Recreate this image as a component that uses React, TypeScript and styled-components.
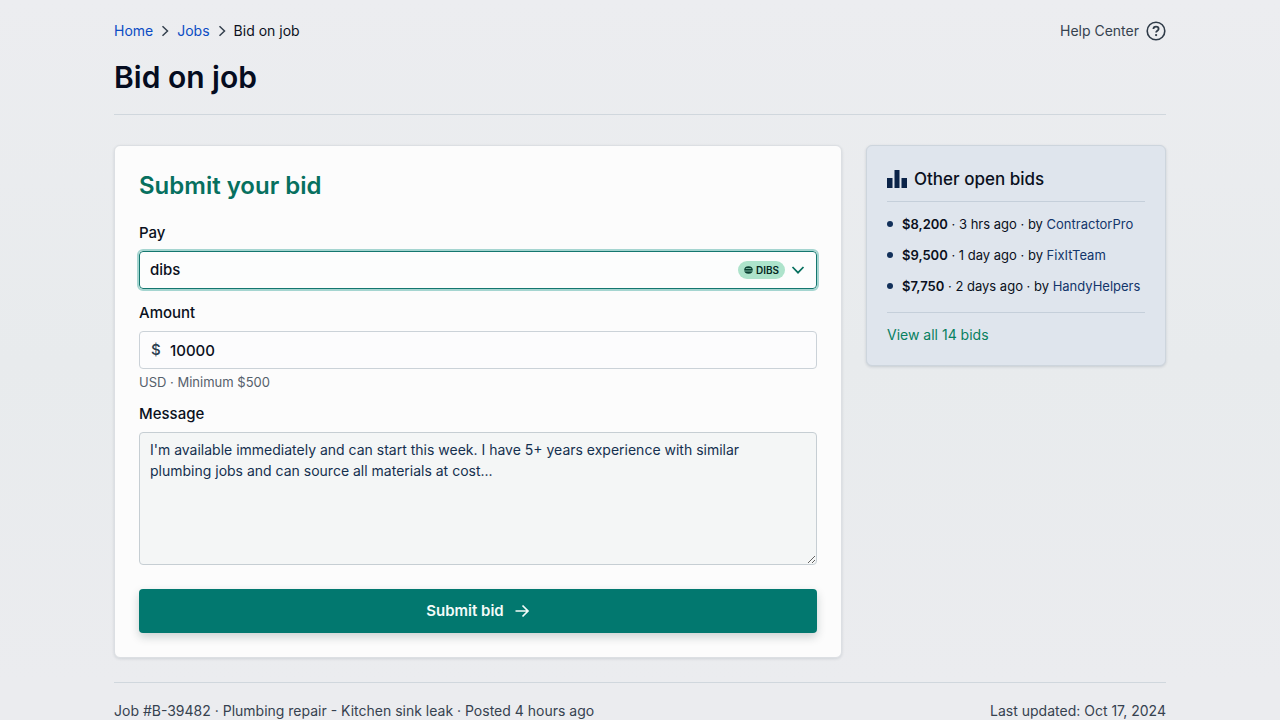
import React from "react";
import styled, { createGlobalStyle } from "styled-components";

const GlobalStyle = createGlobalStyle`
  *, *::before, *::after { box-sizing: border-box; }
  body {
    margin: 0;
    min-height: 100vh;
    background: linear-gradient(180deg, #ecedf0 0%, #e8ebed 50%, #ebecef 95%);
    color: #0a1020;
    font-family: Inter, "Liberation Sans", sans-serif;
    font-size: 14px;
    line-height: 20px;
  }
  a { text-decoration: none; }
  input, select, textarea, button { font: inherit; color: inherit; margin: 0; }
`;

const Page = styled.div`
  max-width: 1100px;
  margin: 0 auto;
  padding: 21px 24px 0;
`;

const TopBar = styled.div`
  display: flex;
  justify-content: space-between;
  align-items: center;
`;

const Crumbs = styled.ol`
  display: flex;
  align-items: center;
  gap: 8px;
  margin: 0;
  padding: 0;
  list-style: none;
`;

const Crumb = styled.li`
  display: flex;
  align-items: center;
  gap: 8px;
  color: #0c111c;
  a { color: #0a4cc4; }
`;

const HelpLink = styled.a`
  display: flex;
  align-items: center;
  gap: 7px;
  color: #36424f;
`;

const PageTitle = styled.h1`
  margin: 16px 0 0;
  font-size: 30px;
  line-height: 40px;
  font-weight: 600;
  color: #050c20;
`;

const Divider = styled.hr<{ $space: number }>`
  margin: ${(p) => p.$space}px 0 0;
  border: 0;
  border-top: 1px solid #d0d7dd;
`;

const Columns = styled.div`
  display: grid;
  grid-template-columns: minmax(0, 1fr) 300px;
  align-items: start;
  gap: 24px;
  margin-top: 30px;
`;

const FormCard = styled.form`
  display: flex;
  flex-direction: column;
  padding: 24px;
  background: #fcfcfc;
  border: 1px solid #dcdfe3;
  border-radius: 6px;
  box-shadow: 0 1px 3px rgba(20, 40, 60, 0.12);
`;

const FormTitle = styled.h2`
  margin: 0 0 21px;
  font-size: 24px;
  line-height: 32px;
  font-weight: 600;
  color: #07705f;
`;

const Field = styled.div<{ $gap: number }>`
  display: flex;
  flex-direction: column;
  margin-bottom: ${(p) => p.$gap}px;
`;

const Label = styled.label`
  margin-bottom: 8px;
  font-size: 15px;
  font-weight: 500;
`;

const Control = styled.div`
  position: relative;
  display: flex;
  align-items: center;
`;

const PaySelect = styled.select`
  appearance: none;
  width: 100%;
  height: 38px;
  padding: 0 88px 0 10px;
  font-size: 15px;
  font-weight: 500;
  background: #fcfdfd;
  border: 1px solid #14776f;
  border-radius: 4px;
  outline: 2px solid #a5d5d0;
`;

const SelectAdornment = styled.span`
  position: absolute;
  right: 12px;
  display: flex;
  align-items: center;
  gap: 6px;
  color: #07705f;
  pointer-events: none;
`;

const Badge = styled.span`
  display: flex;
  align-items: center;
  gap: 3px;
  height: 18px;
  padding: 0 6px;
  border-radius: 9px;
  background: #ade3cb;
  color: #06281f;
  font-size: 10px;
  line-height: 18px;
  font-weight: 600;
`;

const AmountInput = styled.input`
  width: 100%;
  height: 38px;
  padding: 0 12px 0 30px;
  font-size: 15px;
  font-weight: 500;
  background: #fcfcfd;
  border: 1px solid #cbd2d8;
  border-radius: 4px;
`;

const Currency = styled.span`
  position: absolute;
  left: 12px;
  font-size: 15px;
  font-weight: 500;
  color: #2b3d4f;
`;

const Hint = styled.p`
  margin: 3px 0 0;
  font-size: 13px;
  color: #55606b;
`;

const MessageBox = styled.textarea`
  display: block;
  width: 100%;
  height: 133px;
  padding: 6px 10px;
  line-height: 21px;
  color: #14304f;
  background: #f4f6f6;
  border: 1px solid #c6ced3;
  border-radius: 4px;
  resize: vertical;
`;

const SubmitButton = styled.button`
  display: flex;
  align-items: center;
  justify-content: center;
  gap: 10px;
  height: 44px;
  border: 0;
  border-radius: 4px;
  background: #02786f;
  color: #f4fbf9;
  font-size: 15px;
  font-weight: 600;
  box-shadow: 0 4px 10px rgba(10, 40, 40, 0.2);
  cursor: pointer;
`;

const BidsCard = styled.aside`
  padding: 20px;
  background: #dfe5ed;
  border: 1px solid #cdd5dd;
  border-radius: 6px;
  box-shadow: 0 1px 3px rgba(20, 40, 60, 0.16);
`;

const BidsTitle = styled.h2`
  display: flex;
  align-items: center;
  gap: 7px;
  margin: 0 0 9px;
  font-size: 17px;
  line-height: 26px;
  font-weight: 500;
`;

const BidsList = styled.ul`
  display: flex;
  flex-direction: column;
  gap: 11px;
  margin: 0;
  padding: 12px 0 16px;
  list-style: none;
  border-top: 1px solid #c5cfda;
  border-bottom: 1px solid #c5cfda;
`;

const Bid = styled.li`
  display: flex;
  align-items: center;
  gap: 9px;
  white-space: nowrap;
  font-size: 13px;
  &::before {
    content: "";
    flex: none;
    width: 6px;
    height: 6px;
    border-radius: 50%;
    background: #12305a;
  }
  strong { font-weight: 600; }
  a { color: #12356b; }
`;

const ViewAll = styled.a`
  display: block;
  margin-top: 12px;
  color: #07805f;
`;

const Footer = styled.footer`
  display: flex;
  justify-content: space-between;
  padding-top: 18px;
  color: #36424f;
`;

const Chevron = () => (
  <svg width="8" height="12" viewBox="0 0 8 12" fill="none" stroke="#34404d" strokeWidth="1.5" aria-hidden="true">
    <path d="M1.5 1.2 6.5 6 1.5 10.8" />
  </svg>
);

const HelpIcon = () => (
  <svg width="20" height="20" viewBox="0 0 20 20" fill="none" stroke="#2f3b48" strokeWidth="1.6" aria-hidden="true">
    <circle cx="10" cy="10" r="8.8" />
    <path d="M7.4 8.1C7.4 6.5 8.5 5.6 10 5.6s2.6 1 2.6 2.3c0 1.8-2.5 1.900-2.500 3.700" strokeWidth="1.8" />
    <circle cx="10.1" cy="14.1" r="1.15" fill="#2f3b48" stroke="none" />
  </svg>
);

const BarsIcon = () => (
  <svg width="20" height="18" viewBox="0 0 20 18" fill="#0a2348" aria-hidden="true">
    <path d="M0 8h5.5v10H0zM7.500 0h5v18h-5zM14.500 8H20v10h-5.500z" />
  </svg>
);

const CoinIcon = () => (
  <svg width="9" height="8" viewBox="0 0 9 8" aria-hidden="true">
    <ellipse cx="4.5" cy="4" rx="4.3" ry="3.8" fill="#0b4033" />
    <path d="M1.800 2.500h5.400M0 5h9" stroke="#8fd0b6" strokeWidth=".8" />
  </svg>
);

const bids = [
  { amount: "$8,200", age: "3 hrs ago", by: "ContractorPro" },
  { amount: "$9,500", age: "1 day ago", by: "FixItTeam" },
  { amount: "$7,750", age: "2 days ago", by: "HandyHelpers" },
];

export default function App() {
  return (
    <>
      <GlobalStyle />
      <Page>
        <header>
          <TopBar>
            <nav aria-label="Breadcrumb">
              <Crumbs>
                <Crumb><a href="#home">Home</a><Chevron /></Crumb>
                <Crumb><a href="#jobs">Jobs</a><Chevron /></Crumb>
                <Crumb aria-current="page">Bid on job</Crumb>
              </Crumbs>
            </nav>
            <HelpLink href="#help">Help Center<HelpIcon /></HelpLink>
          </TopBar>
          <PageTitle>Bid on job</PageTitle>
          <Divider $space={17} />
        </header>
        <Columns>
          <FormCard onSubmit={(e) => e.preventDefault()}>
            <FormTitle>Submit your bid</FormTitle>
            <Field $gap={14}>
              <Label htmlFor="pay">Pay</Label>
              <Control>
                <PaySelect id="pay" defaultValue="dibs">
                  <option value="dibs">dibs</option>
                </PaySelect>
                <SelectAdornment>
                  <Badge><CoinIcon />DIBS</Badge>
                  <svg width="14" height="8" viewBox="0 0 14 8" fill="none" stroke="currentColor" strokeWidth="1.7" aria-hidden="true">
                    <path d="M1.5 1 7 6.700 12.500 1" />
                  </svg>
                </SelectAdornment>
              </Control>
            </Field>
            <Field $gap={12}>
              <Label htmlFor="amount">Amount</Label>
              <Control>
                <AmountInput id="amount" inputMode="numeric" defaultValue="10000" aria-describedby="amount-hint" />
                <Currency>$</Currency>
              </Control>
              <Hint id="amount-hint">USD · Minimum $500</Hint>
            </Field>
            <Field $gap={24}>
              <Label htmlFor="message">Message</Label>
              <MessageBox
                id="message"
                defaultValue={
                  "I'm available immediately and can start this week. I have 5+ years experience with similar\nplumbing jobs and can source all materials at cost..."
                }
              />
            </Field>
            <SubmitButton type="submit">
              Submit bid
              <svg width="16" height="14" viewBox="0 0 16 14" fill="none" stroke="currentColor" strokeWidth="1.7" aria-hidden="true">
                <path d="M1.5 7h12.500M8.500 1.500 14 7l-5.500 5.500" />
              </svg>
            </SubmitButton>
          </FormCard>
          <BidsCard>
            <BidsTitle><BarsIcon />Other open bids</BidsTitle>
            <BidsList>
              {bids.map((b) => (
                <Bid key={b.by}>
                  <span>
                    <strong>{b.amount}</strong> · {b.age} · by <a href="#bidder">{b.by}</a>
                  </span>
                </Bid>
              ))}
            </BidsList>
            <ViewAll href="#bids">View all 14 bids</ViewAll>
          </BidsCard>
        </Columns>
        <Divider $space={24} />
        <Footer>
          <span>Job #B-39482 · Plumbing repair - Kitchen sink leak · Posted 4 hours ago</span>
          <span>Last updated: Oct 17, 2024</span>
        </Footer>
      </Page>
    </>
  );
}
